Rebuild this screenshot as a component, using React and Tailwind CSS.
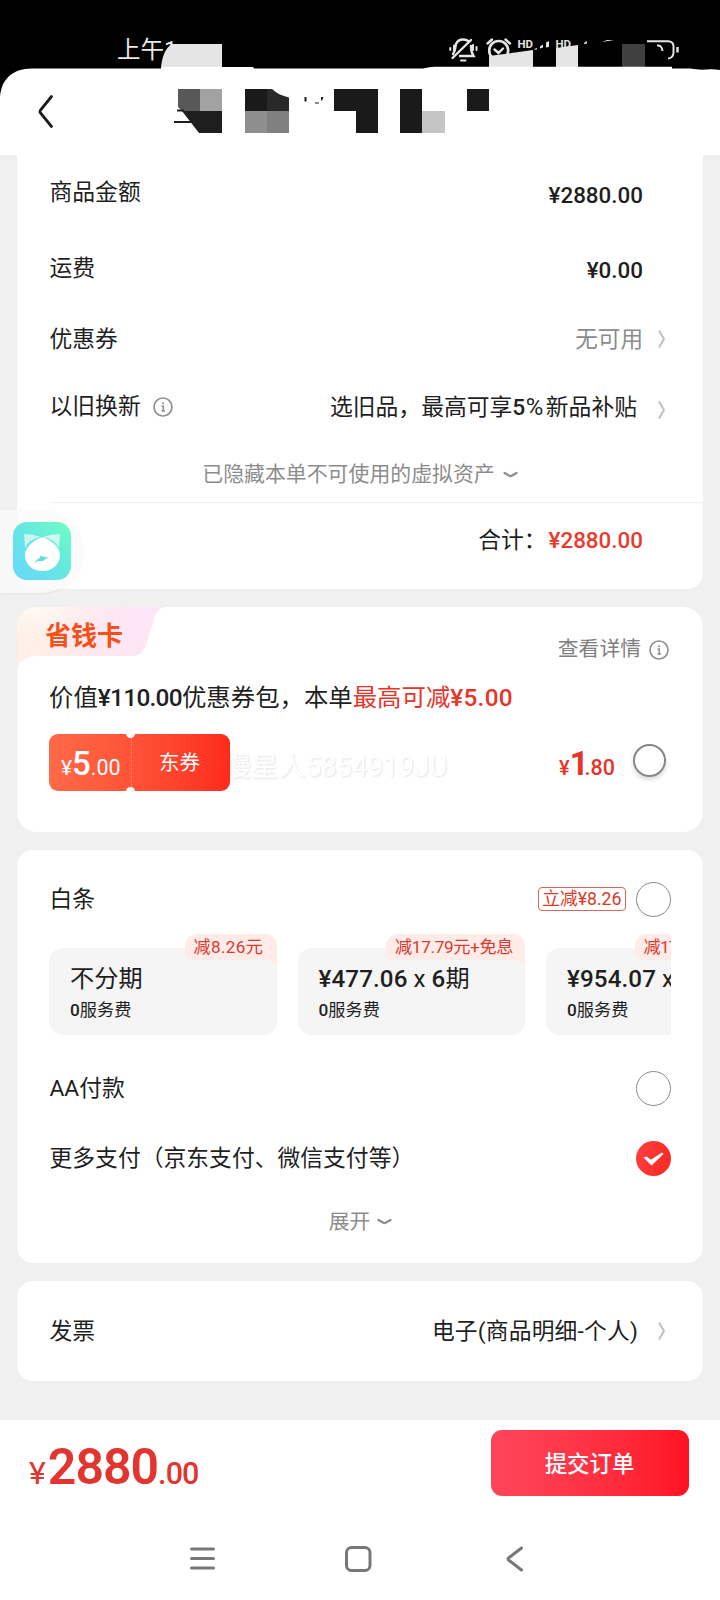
import React from 'react';

const plans = [
  { title: '不分期', badge: '减8.26元', badgeWidth: 'w-[92px] tracking-[0.3px]' },
  { title: '¥477.06 x 6期', badge: '减17.79元+免息', badgeWidth: 'w-[139px] tracking-[-0.35px]' },
  { title: '¥954.07 x', badge: '减17', badgeWidth: 'w-[139px] tracking-[-0.8px]' },
];

export default function App() {
  return (
    <div className="relative flex h-[1600px] w-[720px] flex-col overflow-hidden bg-[#f0f0f0] font-[Roboto,'Noto_Sans_CJK_SC',sans-serif] text-[22.8px] leading-none text-[#1f1f1f]">
      <Header />

      <main className="flex flex-1 flex-col gap-[18px] pr-[17px] pl-[17px]">
        {/* Amounts */}
        <section className="h-[434px] rounded-b-[16px] bg-white">
          <Row className="h-[75px] pr-[60px]" label="商品金额">
            <span className="pt-[5px] text-[22.4px] font-medium">¥2880.00</span>
          </Row>
          <Row className="h-[76px] pr-[60px]" label="运费">
            <span className="pt-[5px] text-[22.4px] font-medium">¥0.00</span>
          </Row>
          <Row className="h-[66px] pr-[37px]" label="优惠券">
            <span className="mr-[14px] pt-[2px] text-[22.600px] text-[#8c8c8c]">无可用</span>
            <Chevron />
          </Row>
          <Row className="h-[69px] pr-[37px]" label="以旧换新" info>
            <span className="mr-[20px] pt-[1px]">
              选旧品，最高可享<span className="font-medium tracking-[0.5px]">5</span>
              <span className="inline-block w-[20px] text-[24px] leading-none">%</span>新品补贴
            </span>
            <Chevron className="mt-1.5" />
          </Row>
          <div className="flex h-[61px] items-center justify-center gap-[8px] pt-[6px] text-[20.900px] text-[#8c8c8c]">
            已隐藏本单不可使用的虚拟资产
            <Caret />
          </div>
          <div className="ml-[33px] flex h-[75px] items-center justify-end border-t border-[#f0f0f0] pr-[60px]">
            <span className="mr-[2px] pt-[2px]">合计：</span>
            <span className="text-[22.4px] font-medium text-[#ea3a2c]">¥2880.00</span>
          </div>
        </section>

        {/* Saving card */}
        <section className="relative h-[225px] overflow-hidden rounded-[20px] bg-white">
          <svg className="absolute top-0 left-0" width="150" height="66" viewBox="0 0 150 66">
            <defs>
              <linearGradient id="tab" x1="0" y1="0.2" x2="0.8" y2="0">
                <stop offset="0" stopColor="#ffefe8" />
                <stop offset="0.5" stopColor="#fee7ee" />
                <stop offset="1" stopColor="#fce6f8" />
              </linearGradient>
              <radialGradient id="tabGlow" cx="0.1" cy="0" r="0.6">
                <stop offset="0" stopColor="#fffcf2" />
                <stop offset="1" stopColor="#fff4ee" stopOpacity="0" />
              </radialGradient>
            </defs>
            <path d="M0 0H148C142 1 139 6 137 12L129 38C126 46 122 49 114 49H20C9 49 3 54 0 63Z" fill="url(#tab)" />
            <path d="M0 0H148C142 1 139 6 137 12L129 38C126 46 122 49 114 49H20C9 49 3 54 0 63Z" fill="url(#tabGlow)" />
          </svg>
          <div className="relative flex h-[62px] justify-between pr-[34px] pl-[28px]">
            <span className="pt-[16px] text-[26px] font-bold text-[#f4501c]">省钱卡</span>
            <span className="flex items-center gap-[8px] pt-[23px] text-[20.8px] text-[#808080]">
              查看详情
              <InfoIcon />
            </span>
          </div>
          <p className="pt-[17px] pl-[32px] text-[24.4px]">
            价值<span className="font-medium tracking-[-0.7px]">¥110.00</span>优惠券包，本单
            <span className="text-[#e8352a]">
              最高可减<span className="font-medium tracking-[0.25px]">¥5.00</span>
            </span>
          </p>
          <div className="mt-[24px] flex h-[57px] items-center pl-[32px]">
            <Coupon />
            <span className="-ml-[6px] pt-[10px] text-[27px] tracking-[0.3px] whitespace-nowrap text-white [text-shadow:1px_1px_2px_#e2e2e2]">
              慢星人5854919JU
            </span>
            <span className="ml-auto flex items-baseline pt-[2px] font-medium text-[#e5342a]">
              <span className="text-[20px]">¥</span>
              <span className="text-[33px] font-bold tracking-[-4px]">1</span>
              <span className="text-[21.5px]">.80</span>
            </span>
            <span className="mr-[37px] ml-[18px] size-[33px] -translate-y-[2px] rounded-full border-[2.5px] border-[#868686] shadow-[0_3px_4px_rgba(0,0,0,0.14)]"></span>
          </div>
        </section>

        {/* Payment methods */}
        <section className="h-[413px] rounded-[16px] bg-white pt-[14px]">
          <Row className="h-[70px] pr-[32px]" label="白条">
            <span className="mr-[10px] flex h-[24px] items-center rounded-[4px] border border-[#d4685c] px-[3.5px] pt-px text-[17.7px] text-[#d93a2a]">
              立减¥8.26
            </span>
            <Radio />
          </Row>
          <div className="mr-[32px] ml-[32px] flex gap-[21px] overflow-hidden">
            {plans.map((plan, i) => (
              <Plan key={i} {...plan} />
            ))}
          </div>
          <Row className="mt-[18px] h-[70px] pr-[32px]" label="AA付款">
            <Radio />
          </Row>
          <Row className="h-[70px] pr-[32px]" label="更多支付（京东支付、微信支付等）">
            <Radio checked />
          </Row>
          <div className="mt-[18px] flex h-[22px] items-center justify-center gap-[7px] pl-[1px] text-[20.8px] text-[#8c8c8c]">
            展开
            <Caret />
          </div>
        </section>

        {/* Invoice */}
        <section className="h-[100px] rounded-[16px] bg-white">
          <Row className="h-[100px] pr-[37px]" label="发票">
            <span className="mr-[19px] pt-[2px] tracking-[0.15px]">电子(商品明细-个人)</span>
            <Chevron />
          </Row>
        </section>
      </main>

      {/* Submit bar */}
      <footer className="h-[180px] bg-white">
        <div className="flex h-[86px] items-center justify-between pr-[31.5px] pl-[29px]">
          <span className="flex items-baseline pt-[7px] text-[#e23530]">
            <span className="text-[32px]">¥</span>
            <span className="ml-[2px] text-[50px] font-semibold tracking-[-1px]">2880</span>
            <span className="text-[30.5px] font-medium tracking-[-0.9px]">.00</span>
          </span>
          <button className="h-[66px] w-[198px] rounded-[11px] bg-gradient-to-r from-[#ff455b] to-[#ff1022] pt-[2px] text-[22.4px] font-medium text-white">
            提交订单
          </button>
        </div>
        <NavBar />
      </footer>

      <FloatingBadge />
    </div>
  );
}

function Header() {
  return (
    <header className="relative h-[155px] shrink-0 bg-black">
      <div className="flex h-[68px] items-end pb-[6px] pl-[117px] text-[23.5px] text-[#e8e8e8]">上午1</div>
      <svg className="absolute top-0 left-0" width="720" height="155" viewBox="0 0 720 155">
        {/* Status icons */}
        <g fill="none" stroke="#e5e5e5" strokeWidth="2.4" strokeLinecap="round">
          <path d="M453 54C456 50 455 47 456 44C457.500 40.500 460 39.500 463 39.500C466 39.500 467.500 40 469 42M471 46C471 50 471.500 53 473.500 56H460M452.500 58L471 40" />
          <path d="M461 60.500H465.500M450.300 48V50M454 45.500V52M473 45V50M476.500 47V50" strokeWidth="2" />
          <circle cx="498.700" cy="50.500" r="9.500" strokeWidth="2.600" />
          <path d="M494.500 49.500L498.500 53L503 48.500M487.500 43.500L492 39.500M505.500 39.500L510 43.500" />
        </g>
        <g fill="#e5e5e5" fontFamily="Roboto, sans-serif" fontSize="10.500" fontWeight="700">
          <text x="517.500" y="47.500" textLength="15.500" lengthAdjust="spacingAndGlyphs">HD</text>
          <text x="555.500" y="47.500" textLength="15.500" lengthAdjust="spacingAndGlyphs">HD</text>
        </g>
        <g fill="#e5e5e5">
          <path d="M540 46.500L543 44.500V47.500L540 48.500ZM546 42.500L549 41V47L546 47.500ZM534 49L537 48V49.500H534ZM584 43L587 41V43.500L584 44ZM602 42C606 39.500 610 39.500 614 40.500C609 41 606 41 602 42Z" />
          <path d="M489 56L533 50V67H489ZM556 48L578 45V67H556ZM161 68C162 57 165 48 172 44H222V68Z" />
        </g>
        <rect x="622" y="44" width="23" height="23" fill="#404040" />
        <g fill="none" stroke="#e5e5e5" strokeWidth="2">
          <path d="M647 41.200H668Q673.500 41.500 673.500 46V53Q673 58 668 58.500M657 45.500Q662 45 662.500 51" />
          <path d="M677.500 47V52.500" strokeWidth="2.500" />
        </g>

        {/* Sheet top edge */}
        <path d="M0 155V100C0 80 12 68.500 32 68.500H161V67H253L254 68.500H423Q430 66.500 436 66.700H672V68.500H690Q698 70 706 69.500Q714 69 720 70V155Z" fill="#fff" />
        <path d="M51.500 96.500L40.500 110Q39.500 111.500 40.500 113L51.500 126.500" fill="none" stroke="#1c1c1c" strokeWidth="2.800" strokeLinecap="round" />

        {/* Masked title */}
        <path d="M178 89H200V111H182L178 107Z" fill="#585858" />
        <path d="M200 89H222V111H200Z" fill="#a2a2a2" />
        <path d="M182 111H222V133H199Z" fill="#1e1e1e" />
        <path d="M177 110.500H184M174 122H191" stroke="#1e1e1e" strokeWidth="2.200" />
        <path d="M245 89H267V111H245Z" fill="#1a1a1a" />
        <path d="M267 89H272C276 93 282 96 289 97.500V111H267Z" fill="#292929" />
        <path d="M245 111H267V133H245Z" fill="#8e8e8e" />
        <path d="M267 111H289V133H267Z" fill="#808080" />
        <path d="M304.500 97H306.500V101.500H304.500ZM315 102.500H319V103.500H315ZM321 97H323.500L322 100.500H321Z" fill="#1a1a1a" />
        <path d="M334 89H378V133H356V111H334ZM400 89H422V133H400ZM467 89H489V111H467Z" fill="#1a1a1a" />
        <path d="M422 111H445V133H422Z" fill="#c5c5c5" />
      </svg>
    </header>
  );
}

function Row({ label, info, className, children }) {
  return (
    <div className={`flex items-center pl-[32.5px] ${className}`}>
      <span className="pt-[2px]">{label}</span>
      {info && <InfoIcon className="ml-[12px]" />}
      <div className="ml-auto flex items-center">{children}</div>
    </div>
  );
}

function InfoIcon({ className = '' }) {
  return (
    <svg className={className} width="20" height="20" viewBox="0 0 20 20" fill="none" stroke="#8f8f8f" strokeWidth="1.7">
      <circle cx="10" cy="10" r="9" />
      <path d="M8.500 9H10.200V14M8.500 14H12" strokeWidth="1.500" />
      <circle cx="10" cy="6.200" r="0.600" fill="#8f8f8f" strokeWidth="1" />
    </svg>
  );
}

function Chevron({ className = '' }) {
  return (
    <svg className={className} width="9" height="20" viewBox="0 0 9 20" fill="none" stroke="#c2c2c2" strokeWidth="2.2">
      <path d="M2 1.500L6.500 9.200Q7 10 6.500 10.800L2 18.500" />
    </svg>
  );
}

function Caret() {
  return (
    <svg width="15" height="8" viewBox="0 0 15 8" fill="none" stroke="#8c8c8c" strokeWidth="2.200" strokeLinecap="round">
      <path d="M1.500 2L6.500 4.800Q7.500 5.300 8.500 4.800L13.500 2" />
    </svg>
  );
}

function Radio({ checked }) {
  if (checked) {
    return (
      <svg width="35" height="35" viewBox="0 0 35 35">
        <defs>
          <linearGradient id="check" x1="0" y1="0" x2="1" y2="0.3">
            <stop offset="0" stopColor="#ff3f45" />
            <stop offset="1" stopColor="#fb2c22" />
          </linearGradient>
        </defs>
        <circle cx="17.500" cy="17.500" r="17.500" fill="url(#check)" />
        <path d="M7.500 16.500L10.500 15.500L14.800 18.800L26 11.500L27.500 13L15.500 24.500Z" fill="#fff" />
      </svg>
    );
  }
  return <span className="size-[35px] rounded-full border border-[#8a8a8a]"></span>;
}

function Coupon() {
  return (
    <div className="relative flex h-[57px] w-[181px] shrink-0 rounded-[9px] bg-gradient-to-r from-[#ff6a48] to-[#ff2a1c] text-white">
      <div className="flex w-[82px] items-baseline pt-[12px] pl-[12px]">
        <span className="text-[21px]">¥</span>
        <span className="text-[33px] leading-[36px] font-medium">5</span>
        <span className="text-[21.5px]">.00</span>
      </div>
      <div className="flex flex-1 items-center border-l border-dotted border-white/40 pt-[1px] pl-[27px] text-[20.5px]">东券</div>
      <span className="absolute -top-[5px] left-[77px] size-[9px] rounded-full bg-white"></span>
      <span className="absolute -bottom-[5px] left-[77px] size-[9px] rounded-full bg-white"></span>
    </div>
  );
}

function Plan({ title, badge, badgeWidth }) {
  return (
    <div className="relative w-[227.5px] shrink-0 pt-[14px]">
      <div className="h-[87px] rounded-[14px] bg-[#f5f5f5] pt-[19px] pl-[21px]">
        <div className="text-[24.200px] font-medium">
          {title.split(/([\u4e00-\u9fff]+| x ?)/).map((part, i) => (
            <span key={i} className={i % 2 ? 'font-normal' : 'tracking-[0.1px]'}>{part}</span>
          ))}
        </div>
        <div className="pt-[11px] text-[17.2px]">
          <span className="font-medium">0</span>服务费
        </div>
      </div>
      <div className={`absolute top-0 right-0 flex h-[26px] items-center rounded-l-[12px] rounded-tr-[12px] rounded-bl-[8px] bg-[#ffebe8] pt-px pl-[9px] text-[17.2px] whitespace-nowrap text-[#dc3a30] ${badgeWidth}`}>
        {badge}
      </div>
      <svg className="absolute top-[25px] right-0" width="12" height="11" viewBox="0 0 12 11">
        <path d="M0 0H12V11C11 4 7 0 0 0Z" fill="#ffebe8" />
      </svg>
    </div>
  );
}

function NavBar() {
  return (
    <div className="flex h-[94px] items-center pt-[11px] pl-[190px]">
      <svg width="335" height="30" viewBox="0 0 335 30" fill="none" stroke="#787878" strokeWidth="3" strokeLinecap="round">
        <path d="M1.500 5H23.500M1.500 14.500H23.500M1.500 24H23.500" />
        <rect x="156.500" y="3.500" width="23.500" height="23" rx="5" />
        <path d="M331.500 4L318.500 14Q317.500 15 318.500 16L331.500 26" />
      </svg>
    </div>
  );
}

function FloatingBadge() {
  return (
    <div className="absolute top-[510px] left-0 h-[83px] w-[83px] rounded-r-[42px] bg-[#fafafa]/80 pt-[12px] pl-[13px] shadow-[0_1px_3px_rgba(0,0,0,0.06)]">
      <svg width="58" height="58" viewBox="0 0 58 58">
        <defs>
          <linearGradient id="cat" x1="0" y1="1" x2="1" y2="0">
            <stop offset="0" stopColor="#68d8ff" />
            <stop offset="0.5" stopColor="#66e6e2" />
            <stop offset="1" stopColor="#6fffc2" />
          </linearGradient>
        </defs>
        <rect width="58" height="58" rx="14" fill="url(#cat)" />
        <path d="M11 12Q20 12 28 15Q16 17 12 26ZM47 12Q38 12 30 15Q42 17 46 26Z" fill="#fff" fillOpacity="0.650" />
        <path d="M29.500 15C41 19 47.500 27 47 34C46 43 39 49 29.500 49C20 49 12.500 43 12 34C11.500 27 18 19 29.500 15Z" fill="#fff" />
        <path d="M21 42L24 37.500L27 36L27.500 33.500L31 35L36 35.500L32.500 37L30 39L25 39Z" fill="#5fdde0" />
      </svg>
    </div>
  );
}
